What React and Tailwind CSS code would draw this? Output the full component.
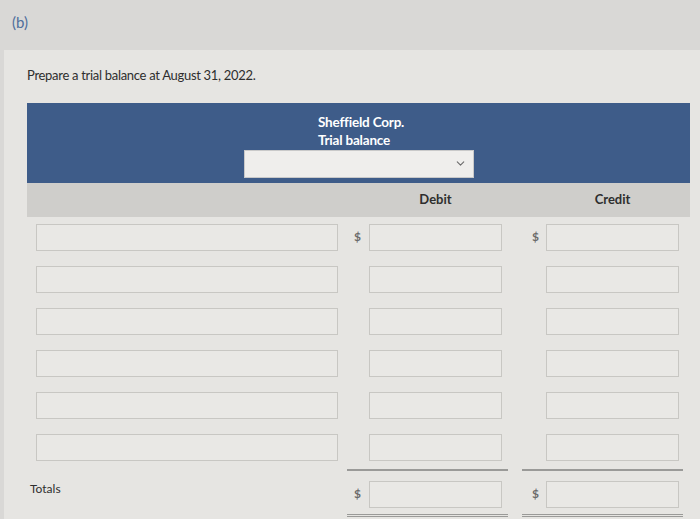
import { ChevronDown } from "lucide-react";

const rows = [0, 1, 2, 3, 4, 5];

function Box({ className }) {
  return <div className={"h-[27px] border border-[#c8c7c3] bg-[#e9e8e5] " + className} />;
}

function Row({ first }) {
  return (
    <div className="flex items-center pl-[9px]">
      <Box className="w-[302px]" />
      <div className="w-[31px] text-right pr-[8px] text-[12px] font-bold text-[#6b6b6b]">{first ? "$" : ""}</div>
      <Box className="w-[133px]" />
      <div className="w-[44px] text-right pr-[7px] text-[12px] font-bold text-[#6b6b6b]">{first ? "$" : ""}</div>
      <Box className="w-[133px]" />
    </div>
  );
}

export default function App() {
  return (
    <div className="w-[700px] h-[519px] overflow-hidden bg-[#d9d8d6] text-[#2e2e2e]" style={{ fontFamily: "Lato, 'Open Sans', sans-serif" }}>
      <div className="h-[50px] pl-[12px] pt-[11px] text-[15px] text-[#4f6f9c]">(b)</div>
      <div className="ml-[4px] h-[469px] bg-[#e6e5e2] pt-[16px]">
        <p className="pl-[23px] text-[13px] tracking-[-0.3px]">Prepare a trial balance at August 31, 2022.</p>
        <div className="ml-[23px] mt-[17px] w-[663px]">
          <div className="h-[80px] bg-[#3e5c89] pl-[217px] pt-[10px]">
            <div className="w-[230px] pl-[74px] text-[13.5px] font-bold leading-[18px] text-white tracking-[-0.2px]">
              <div>Sheffield Corp.</div>
              <div>Trial balance</div>
            </div>
            <div className="mt-[1px] flex h-[28px] w-[230px] items-center justify-end border border-[#c9c9c9] bg-[#efeeec] pr-[6px]">
              <ChevronDown size={13} strokeWidth={2} className="text-[#6c6c6c]" />
            </div>
          </div>
          <div className="flex h-[34px] items-center bg-[#cfcecb] text-[13px] font-bold">
            <div className="w-[342px]" />
            <div className="w-[133px] text-center">Debit</div>
            <div className="w-[44px]" />
            <div className="w-[133px] text-center">Credit</div>
          </div>
          <div className="mt-[7px] flex flex-col gap-[15px]">
            {rows.map((r) => (
              <Row key={r} first={r === 0} />
            ))}
          </div>
          <div className="mt-[8px] flex pl-[320px]">
            <div className="w-[161px] border-t-2 border-[#9a9a98]" />
            <div className="w-[14px]" />
            <div className="w-[161px] border-t-2 border-[#9a9a98]" />
          </div>
          <div className="mt-[10px] flex items-center">
            <div className="w-[320px] pl-[3px] text-[12px] -mt-[10px]">Totals</div>
            <div className="w-[22px] pr-[8px] text-right text-[12px] font-bold text-[#6b6b6b]">$</div>
            <Box className="w-[133px]" />
            <div className="w-[44px] pr-[7px] text-right text-[12px] font-bold text-[#6b6b6b]">$</div>
            <Box className="w-[133px]" />
          </div>
          <div className="mt-[6px] flex pl-[320px]">
            <div className="w-[161px] border-y border-[#9a9a98] h-[3px]" />
            <div className="w-[14px]" />
            <div className="w-[161px] border-y border-[#9a9a98] h-[3px]" />
          </div>
        </div>
      </div>
    </div>
  );
}
